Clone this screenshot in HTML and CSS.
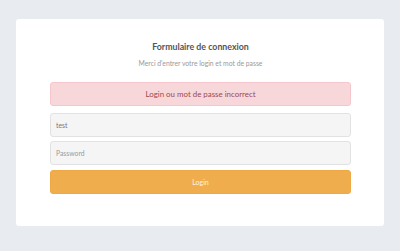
FILE: index.html
```html
<html>
<head>
<link rel="stylesheet" href="styles.css">
</head>
<body>
<div class="box">
  <div class="heading">
    <h4>Formulaire de connexion</h4>
    <p>Merci d'entrer votre login et mot de passe</p>
  </div>
  <form class="form">
    <div class="alert">Login ou mot de passe incorrect</div>
    <input class="field" type="text" value="test">
    <input class="field field-pass" type="password" placeholder="Password">
    <button class="button" type="button">Login</button>
  </form>
</div>
</body>
</html>
```

FILE: styles.css
```css
body
{
margin:0;
padding:19px 16px 25px 16px;
background-color:#e8ecf0;
font-family:Lato, "Open Sans", sans-serif;
}
.box
{
background-color:#ffffff;
border-radius:3px;
height:207px;
box-sizing:border-box;
padding:22px 33px 0 34px;
}
.heading
{
text-align:center;
}
.heading h4
{
margin:0;
font-size:8.8px;
font-weight:700;
color:#555555;
line-height:12px;
}
.heading p
{
margin:6px 0 0 0;
font-size:6.8px;
color:#999999;
line-height:9px;
}
.form
{
display:flex;
flex-direction:column;
margin:14px 0 0 0;
}
.alert
{
background-color:#f8d7da;
border:1px solid #f5c6cb;
border-radius:3px;
color:#9a4a52;
font-size:7.9px;
height:24px;
line-height:22px;
box-sizing:border-box;
text-align:center;
}
.field
{
margin-top:7px;
height:24px;
box-sizing:border-box;
border:1px solid #e2e2e2;
border-radius:3px;
background-color:#f5f5f5;
padding:0 5px;
font-family:Lato, sans-serif;
font-size:6.8px;
color:#777777;
outline:none;
}
.field-pass
{
margin-top:4px;
}
.field::placeholder
{
color:#9a9a9a;
}
.button
{
margin-top:5px;
height:24px;
border:1px solid #eea945;
border-radius:3px;
background-color:#f0ad4e;
color:#fdf2e2;
font-family:Lato, sans-serif;
font-size:7px;
cursor:pointer;
}
```
